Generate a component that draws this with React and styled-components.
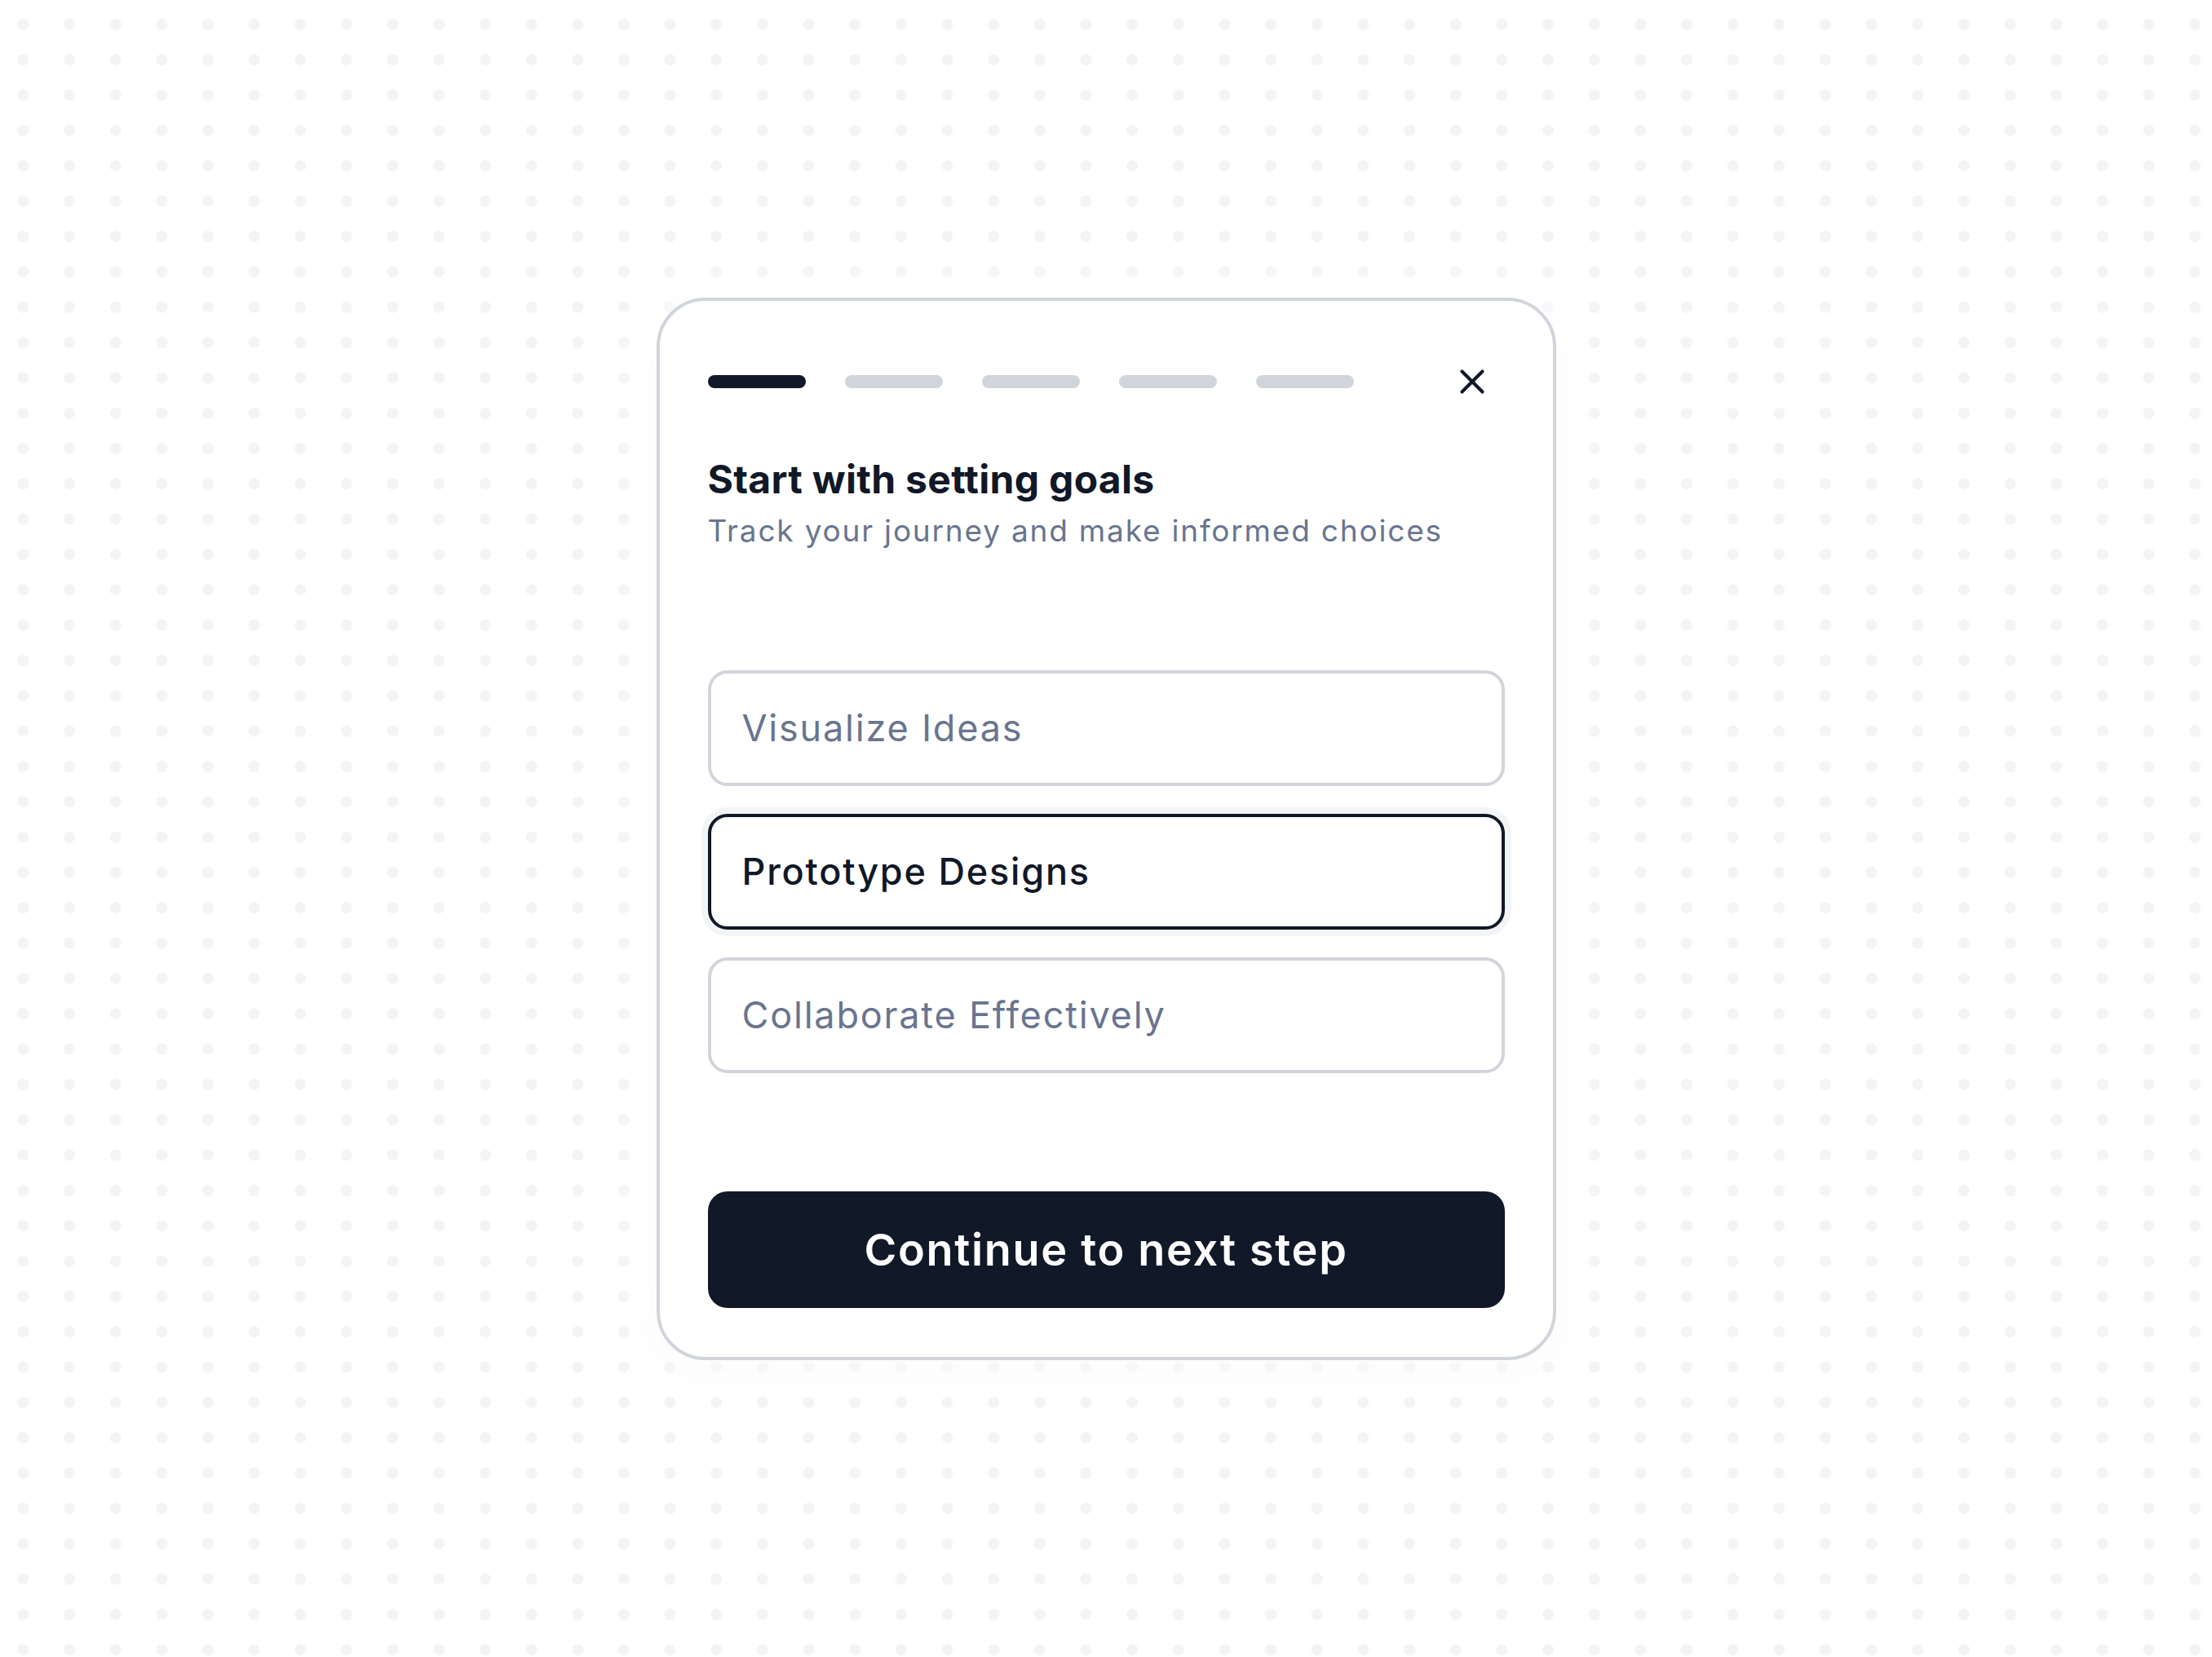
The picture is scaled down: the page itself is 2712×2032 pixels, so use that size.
import React, { useState } from "react";
import styled, { createGlobalStyle } from "styled-components";
import { X } from "lucide-react";

const GlobalStyle = createGlobalStyle`
  html, body {
    margin: 0;
    padding: 0;
  }
  body {
    font-family: "Inter", "Noto Sans", sans-serif;
    background-color: #ffffff;
    background-image: radial-gradient(circle, #f3f4f6 6.5px, transparent 7.5px);
    background-size: 56.67px 43.33px;
    background-position: 0 8.33px;
  }
  * {
    box-sizing: border-box;
  }
`;

const Page = styled.div`
  min-height: 100vh;
  display: flex;
  align-items: center;
  justify-content: center;
`;

const Card = styled.div`
  width: 1103px;
  background: #ffffff;
  border: 4px solid #d1d5db;
  border-radius: 60px;
  padding: 59px 59px 60px;
  display: flex;
  flex-direction: column;
  box-shadow: 0 0 60px 10px rgba(255, 255, 255, 0.9), 0 10px 50px rgba(17, 24, 39, 0.03);
`;

const Header = styled.div`
  height: 80px;
  display: flex;
  align-items: center;
  justify-content: space-between;
`;

const Steps = styled.div`
  display: flex;
  gap: 48px;
`;

const Step = styled.div`
  width: 120px;
  height: 16px;
  border-radius: 8px;
  background: ${(p) => (p.$active ? "#111827" : "#d1d5db")};
`;

const CloseButton = styled.button`
  width: 80px;
  height: 80px;
  border: none;
  background: transparent;
  padding: 0;
  display: flex;
  align-items: center;
  justify-content: center;
  color: #111827;
  cursor: pointer;
`;

const Title = styled.h2`
  margin: 50px 0 0;
  font-size: 48px;
  line-height: 60px;
  font-weight: 700;
  color: #111827;
  letter-spacing: 0.3px;
`;

const Subtitle = styled.p`
  margin: 8px 0 0;
  font-size: 37px;
  line-height: 50px;
  font-weight: 400;
  color: #69758f;
  letter-spacing: 1.8px;
`;

const Options = styled.div`
  margin-top: 146px;
  display: flex;
  flex-direction: column;
  gap: 34px;
`;

const Option = styled.button`
  height: 142px;
  width: 100%;
  padding: 0 38px;
  display: flex;
  align-items: center;
  background: #ffffff;
  border: 4px solid ${(p) => (p.$selected ? "#111827" : "#d1d5db")};
  border-radius: 24px;
  box-shadow: ${(p) => (p.$selected ? "0 0 0 8px #f3f4f6" : "none")};
  font-family: inherit;
  font-size: 45px;
  letter-spacing: 1.8px;
  font-weight: ${(p) => (p.$selected ? 500 : 400)};
  color: ${(p) => (p.$selected ? "#111827" : "#69758f")};
  text-align: left;
  cursor: pointer;
`;

const ContinueButton = styled.button`
  margin-top: 145px;
  height: 143px;
  width: 100%;
  border: none;
  border-radius: 24px;
  background: #111827;
  color: #ffffff;
  font-family: inherit;
  font-size: 54px;
  font-weight: 600;
  letter-spacing: 1.7px;
  cursor: pointer;
`;

const goals = ["Visualize Ideas", "Prototype Designs", "Collaborate Effectively"];

export default function App() {
  const [selected, setSelected] = useState(1);

  return (
    <>
      <GlobalStyle />
      <Page>
        <Card>
          <Header>
            <Steps>
              {[0, 1, 2, 3, 4].map((i) => (
                <Step key={i} $active={i === 0} />
              ))}
            </Steps>
            <CloseButton aria-label="Close">
              <X size={50} strokeWidth={2} />
            </CloseButton>
          </Header>

          <Title>Start with setting goals</Title>
          <Subtitle>Track your journey and make informed choices</Subtitle>

          <Options>
            {goals.map((goal, i) => (
              <Option key={goal} $selected={i === selected} onClick={() => setSelected(i)}>
                {goal}
              </Option>
            ))}
          </Options>

          <ContinueButton>Continue to next step</ContinueButton>
        </Card>
      </Page>
    </>
  );
}
